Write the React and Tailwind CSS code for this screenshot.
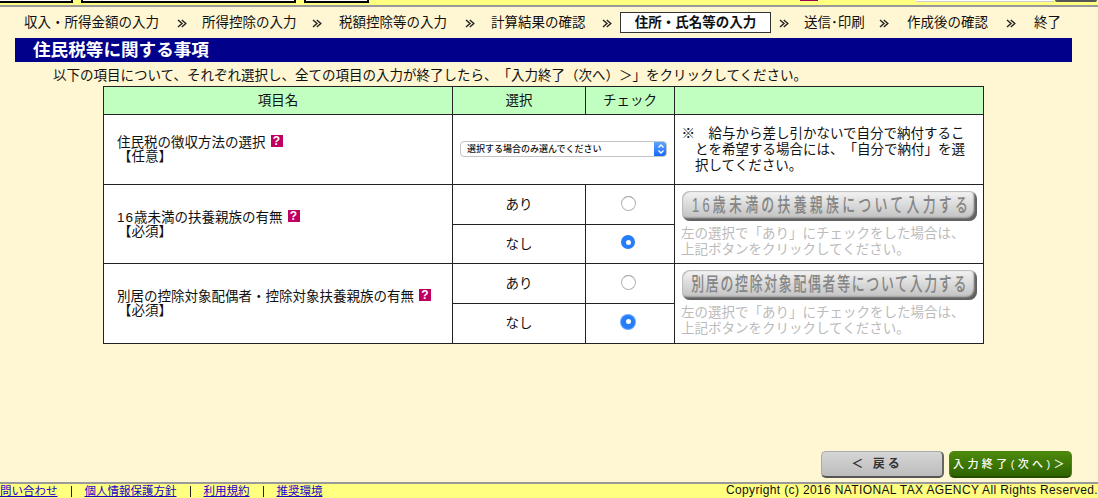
const steps = [
  { label: "収入・所得金額の入力", box: "w-[134px]", arrow: "mr-[15px] ml-[19px]" },
  { label: "所得控除の入力", box: "w-[94px]", arrow: "mr-[17px] ml-[16px]" },
  { label: "税額控除等の入力", box: "w-[108px]", arrow: "mr-4 ml-[18px]" },
  { label: "計算結果の確認", box: "w-[95px]", arrow: "mr-2 ml-4" },
  { label: "住所・氏名等の入力", box: "w-[151px]", arrow: "mr-[15px] ml-2", current: true },
  { label: "送信･印刷", box: "w-[61px]", arrow: "mr-[18px] ml-[14px]" },
  { label: "作成後の確認", box: "w-[81px]", arrow: "mr-[18px] ml-[18px]" },
  { label: "終了", box: "w-[27px]" },
];

const links = ["問い合わせ", "個人情報保護方針", "利用規約", "推奨環境"];

function Arrow({ className }) {
  return (
    <svg viewBox="0 0 10 9" className={`h-[9px] w-[10px] shrink-0 ${className}`} fill="none" stroke="#222" strokeWidth="1.4">
      <path d="M1 1 L5 4.5 L1 8 M4.8 1 L8.8 4.5 L4.8 8" />
    </svg>
  );
}

function TopStrip() {
  return (
    <div className="flex h-[7px] items-start overflow-hidden border-b-2 border-[#999] bg-[#ffff80]">
      <div className="h-[3px] w-[73px] border-r-2 border-b-2 border-black bg-white" />
      <div className="ml-2 h-[3px] w-[215px] border-x-2 border-b-2 border-black bg-white" />
      <div className="ml-[8px] h-[3px] w-[65px] border-x-2 border-b-2 border-black bg-white" />
      <div className="ml-[431px] h-px w-[18px] bg-[#990055]" />
      <div className="ml-[98px] h-[2px] w-[138px] border-b border-[#ccc] bg-white" />
      <div className="ml-px h-[2px] w-[42px] rounded-b bg-[#555]" />
    </div>
  );
}

function Steps() {
  return (
    <div className="flex h-[31px] items-center pl-[24px] text-[13.5px] whitespace-nowrap">
      {steps.map((s) => (
        <div key={s.label} className="flex items-center">
          {s.current ? (
            <div className={`${s.box} flex h-[21px] items-center justify-center border border-[#333] bg-white pt-px font-bold`}>
              {s.label}
            </div>
          ) : (
            <div className={`${s.box} pt-0.5`}>{s.label}</div>
          )}
          {s.arrow && <Arrow className={`${s.arrow} mt-0.5`} />}
        </div>
      ))}
    </div>
  );
}

function Help() {
  return (
    <span className="mb-[3px] ml-[5px] inline-flex h-3 w-3 items-center justify-center bg-[#c00060] font-['Liberation_Sans'] text-[12px] leading-none font-bold text-white">
      ?
    </span>
  );
}

function Item({ name, note }) {
  return (
    <div className="pl-[13px] leading-[15px]">
      <div className="flex items-center">
        {name}
        <Help />
      </div>
      <div className="-mt-px ml-px">【{note}】</div>
    </div>
  );
}

function Radio({ checked, focus }) {
  if (!checked) {
    return <div className="mx-auto h-[15px] w-[15px] rounded-full border border-[#b5b5b5] border-t-[#999] bg-white" />;
  }
  return (
    <div
      className={`mx-auto flex h-[14px] w-[14px] items-center justify-center rounded-full bg-[#267df9] ${
        focus ? "ring-1 ring-[#6ba8fa]" : ""
      }`}
    >
      <div className="h-[5px] w-[5px] rounded-full bg-white" />
    </div>
  );
}

function GrayButton({ children }) {
  return (
    <button className="flex h-[30px] w-[295px] items-center justify-center rounded-[8px] bg-linear-to-b from-[#f4f4f4] to-[#bdbdbd] shadow-[inset_1px_1px_1px_#bbb,inset_-3px_-3px_2px_#606060]">
      {children}
    </button>
  );
}

function ButtonCell({ children }) {
  return (
    <td rowSpan={2} className="border border-[#222] pt-1.5 pl-[7px] align-top">
      <GrayButton>{children}</GrayButton>
      <p className="mt-[5px] -ml-px leading-4 text-[#bbb]">
        左の選択で「あり」にチェックをした場合は、
        <br />
        上記ボタンをクリックしてください。
      </p>
    </td>
  );
}

function YesNoRows({ name, focus, button }) {
  return (
    <>
      <tr className="h-10">
        <td rowSpan={2} className="border border-[#222]">
          <Item name={name} note="必須" />
        </td>
        <td className="border border-[#222] pt-0.5 text-center">あり</td>
        <td className="border border-[#222] pr-[4px] pb-[3px]">
          <Radio />
        </td>
        <ButtonCell>{button}</ButtonCell>
      </tr>
      <tr className={focus ? "h-10" : "h-[39px]"}>
        <td className="border border-[#222] pt-0.5 text-center">なし</td>
        <td className="border border-[#222] pr-[4px] pb-1">
          <Radio checked focus={focus} />
        </td>
      </tr>
    </>
  );
}

function Select() {
  return (
    <div className="mb-0.5 ml-[7px] flex h-4 w-[207px] overflow-hidden rounded-[4px] border border-[#c4c4c4] bg-white">
      <div className="flex-1 pl-1.5 text-[9px] leading-[15px] font-medium">選択する場合のみ選んでください</div>
      <div className="-my-px -mr-px flex w-[13px] items-center justify-center bg-linear-to-b from-[#62a9fb] to-[#0b63f8]">
        <svg viewBox="0 0 8 10" className="h-[10px] w-2" fill="none" stroke="white" strokeWidth="1.3">
          <path d="M1.5 3.5 L4 1 L6.5 3.5 M1.5 6.5 L4 9 L6.5 6.5" />
        </svg>
      </div>
    </div>
  );
}

function MainTable() {
  return (
    <table className="ml-[103px] w-[881px] table-fixed border-collapse bg-white text-[13.5px]">
      <colgroup>
        <col className="w-[349px]" />
        <col className="w-[133px]" />
        <col className="w-[89px]" />
        <col className="w-[309px]" />
      </colgroup>
      <tbody>
        <tr className="h-7 bg-[#c1ffc1] text-center">
          <td className="border border-[#222] pt-0.5">項目名</td>
          <td className="border border-[#222] pt-0.5">選択</td>
          <td className="border border-[#222] pt-0.5">チェック</td>
          <td className="border border-[#222]" />
        </tr>
        <tr className="h-[70px]">
          <td className="border border-[#222]">
            <Item name="住民税の徴収方法の選択" note="任意" />
          </td>
          <td colSpan={2} className="border border-[#222]">
            <Select />
          </td>
          <td className="border border-[#222] pl-[20px] leading-4 whitespace-nowrap">
            <p className="-indent-[13.5px]">※　給与から差し引かないで自分で納付するこ</p>
            <p>とを希望する場合には、「自分で納付」を選</p>
            <p>択してください。</p>
          </td>
        </tr>
        <YesNoRows
          name={
            <>
              <span className="tracking-[1px]">16</span>歳未満の扶養親族の有無
            </>
          }
          button={
            <span className="ml-1 scale-x-66 text-[19.5px] leading-none font-medium tracking-[5px] whitespace-nowrap text-[#858585]">
              16歳未満の扶養親族について入力する
            </span>
          }
        />
        <YesNoRows
          name="別居の控除対象配偶者・控除対象扶養親族の有無"
          focus
          button={
            <span className="scale-x-66 text-[19.5px] leading-none font-medium tracking-[2.6px] whitespace-nowrap text-[#858585]">
              別居の控除対象配偶者等について入力する
            </span>
          }
        />
      </tbody>
    </table>
  );
}

function Footer() {
  return (
    <div className="flex h-4 items-start justify-between overflow-hidden border-t-2 border-[#999] bg-[#ffff80] whitespace-nowrap">
      <div className="flex text-[11.5px] leading-[14px]">
        {links.map((l, i) => (
          <div key={l} className="flex">
            {i > 0 && <span className="mt-[2px] mr-[13px] ml-[13px] h-[11px] w-px bg-[#222]" />}
            <a href="#" className="text-[#1a00cc] underline">
              {l}
            </a>
          </div>
        ))}
      </div>
      <div className="text-[12px] leading-[13px] tracking-[0.36px]">
        Copyright (c) 2016 NATIONAL TAX AGENCY All Rights Reserved.
      </div>
    </div>
  );
}

export default function App() {
  return (
    <div className="flex h-[498px] w-[1098px] flex-col overflow-hidden bg-[#fff6d3] font-['Liberation_Sans','Noto_Sans_CJK_JP',sans-serif] text-[#111] [text-spacing-trim:space-all]">
      <TopStrip />
      <Steps />
      <h1 className="mr-[26px] ml-[15px] h-6 bg-[#00008b] pl-[18px] text-[17.6px] leading-6 font-bold text-white">
        住民税等に関する事項
      </h1>
      <p className="h-[24px] pl-[53px] text-[13.5px] leading-[27px]">
        以下の項目について、それぞれ選択し、全ての項目の入力が終了したら、「入力終了（次へ）＞」をクリックしてください。
      </p>
      <MainTable />
      <div className="mt-auto mr-[26px] mb-[4px] flex justify-end gap-[5px] [&>button]:[text-spacing-trim:space-all]">
        <button className="h-[27px] w-[123px] rounded-[5px] border border-r-2 border-b-2 border-[#aaa] border-r-[#666] border-b-[#555] bg-linear-to-b from-[#d6d6d6] to-[#bcbcbc] pr-2.5 text-[12px] font-bold tracking-[3px] whitespace-pre text-[#333]">
          ＜ 戻る
        </button>
        <button className="h-[27px] w-[123px] rounded-[5px] border border-b-2 border-[#4b8413] border-b-[#234d00] bg-linear-to-b from-[#4c8a0c] to-[#2f6400] text-[11px] font-medium tracking-[3.4px] whitespace-nowrap text-white">
          入力終了(次へ)＞
        </button>
      </div>
      <Footer />
    </div>
  );
}
